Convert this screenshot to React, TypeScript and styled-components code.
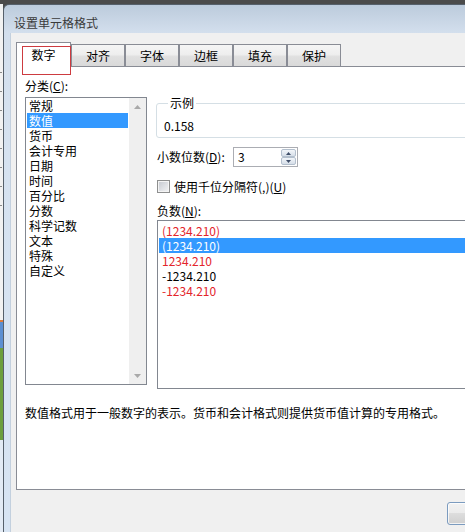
import React from "react";
import styled, { createGlobalStyle } from "styled-components";

const Global = createGlobalStyle`
  html, body { margin: 0; padding: 0; background: #4b4b4b; overflow: hidden; }
  body {
    font-family: "Noto Sans CJK SC", "Microsoft YaHei", sans-serif;
    font-size: 12px;
    color: #000;
  }
  * { box-sizing: border-box; }
`;

const Screen = styled.div`
  width: 465px;
  height: 532px;
  overflow: hidden;
  background: #4b4b4b;
  padding-top: 4px;
  display: flex;
  flex-direction: column;
`;

const Desktop = styled.div`
  flex: 1;
  min-height: 0;
  display: flex;
`;

const SheetEdge = styled.div`
  flex: none;
  width: 3px;
  background:
    repeating-linear-gradient(to bottom, transparent 0, transparent 18px, #8a8a8a 18px, #8a8a8a 19px) 0 50px / 2px 170px no-repeat,
    linear-gradient(
      to bottom,
      #f2f2f2 0,
      #f2f2f2 316px,
      #e07b39 316px,
      #e07b39 318px,
      #5b8fd2 318px,
      #5b8fd2 344px,
      #6c9f3d 344px,
      #6c9f3d 436px,
      #e3ebf5 436px,
      #e3ebf5 100%
    );
`;

const Window = styled.div`
  flex: none;
  width: 622px;
  display: flex;
  flex-direction: column;
  border: 1px solid #56606b;
  border-bottom: none;
  border-radius: 6px 6px 0 0;
  background: linear-gradient(to bottom, #bccbdc 0, #d3dfed 28px, #d6e2f0 140px, #d7e4f3 100%);
`;

const TitleBar = styled.div`
  flex: none;
  height: 28px;
  padding: 10px 0 0 10px;
  line-height: 16px;
  font-size: 12px;
  color: #3a3a3a;
`;

const Client = styled.div`
  flex: 1;
  display: flex;
  flex-direction: column;
  margin: 0 6px;
  padding: 9px 13px 0 5px;
  background: #f0f0f0;
  border-left: 1px solid #c3d0de;
  border-right: 1px solid #c3d0de;
`;

const TabStrip = styled.div`
  flex: none;
  height: 24px;
  display: flex;
  align-items: flex-end;
  position: relative;
  z-index: 1;
`;

const Tab = styled.div<{ $active?: boolean }>`
  flex: none;
  position: relative;
  display: flex;
  align-items: center;
  justify-content: center;
  width: ${(p) => (p.$active ? 55 : 54)}px;
  height: ${(p) => (p.$active ? 25 : 22)}px;
  margin-bottom: ${(p) => (p.$active ? -1 : 0)}px;
  padding-bottom: ${(p) => (p.$active ? 1 : 0)}px;
  border: 1px solid #898c95;
  border-bottom: none;
  background: ${(p) =>
    p.$active
      ? "#ffffff"
      : "linear-gradient(to bottom, #f5f5f5 0%, #eeeeee 45%, #e0e0e0 55%, #d9d9d9 100%)"};
  line-height: 16px;
  color: #000;
`;

const Highlight = styled.div`
  position: absolute;
  left: 5px;
  top: 3px;
  width: 49px;
  height: 29px;
  border: 1px solid #cd3b40;
  pointer-events: none;
`;

const Panel = styled.div`
  flex: none;
  height: 424px;
  display: flex;
  flex-direction: column;
  padding: 11px 8px 0 8px;
  background: #ffffff;
  border: 1px solid #898c95;
`;

const Columns = styled.div`
  display: flex;
  align-items: flex-start;
  gap: 10px;
`;

const LeftColumn = styled.div`
  flex: none;
  width: 122px;
  display: flex;
  flex-direction: column;
`;

const RightColumn = styled.div`
  flex: 1;
  min-width: 0;
  display: flex;
  flex-direction: column;
`;

const FieldLabel = styled.div`
  line-height: 16px;
  white-space: nowrap;
`;

const Key = styled.span`
  text-decoration: underline;
  text-underline-offset: 1px;
`;

const CategoryList = styled.div`
  margin-top: 3px;
  height: 288px;
  display: flex;
  border: 1px solid #828790;
  background: #fff;
`;

const CategoryItems = styled.div`
  flex: 1;
  padding: 0 1px;
  display: flex;
  flex-direction: column;
`;

const CategoryItem = styled.div<{ $selected?: boolean }>`
  height: 15px;
  line-height: 15px;
  padding-left: 2px;
  white-space: nowrap;
  background: ${(p) => (p.$selected ? "#3399ff" : "transparent")};
  color: ${(p) => (p.$selected ? "#ffffff" : "#000000")};
`;

const ScrollTrack = styled.div`
  flex: none;
  width: 17px;
  display: flex;
  flex-direction: column;
  justify-content: space-between;
  background: #efefef;
`;

const ScrollArrow = styled.div`
  height: 17px;
  display: flex;
  align-items: center;
  justify-content: center;
`;

const GroupBox = styled.fieldset`
  margin: 18px 0 0 -1px;
  padding: 8px 6px 3px 7px;
  min-width: 0;
  border: 1px solid #d5dfe5;
  border-radius: 3px;
`;

const GroupLegend = styled.legend`
  margin-left: 4px;
  padding: 0 2px;
  line-height: 14px;
`;

const SampleValue = styled.div`
  line-height: 16px;
`;

const DecimalRow = styled.div`
  margin-top: 9px;
  height: 20px;
  display: flex;
  align-items: center;
`;

const DecimalLabel = styled(FieldLabel)`
  flex: none;
  width: 76px;
`;

const SpinBox = styled.div`
  flex: none;
  width: 65px;
  height: 20px;
  padding: 1px;
  display: flex;
  border: 1px solid #abadb3;
  background: #fff;
`;

const SpinValue = styled.div`
  flex: 1;
  padding-left: 3px;
  line-height: 16px;
`;

const SpinButtons = styled.div`
  flex: none;
  width: 15px;
  display: flex;
  flex-direction: column;
`;

const SpinButton = styled.div`
  flex: 1;
  display: flex;
  align-items: center;
  justify-content: center;
  border: 1px solid #b3bfcd;
  border-radius: 2px;
  background: linear-gradient(to bottom, #f3f6fa 0%, #e4eaf1 50%, #d6dee8 100%);
`;

const CheckRow = styled.div`
  margin-top: 13px;
  height: 13px;
  display: flex;
  align-items: center;
  gap: 4px;
`;

const CheckBox = styled.div`
  flex: none;
  width: 13px;
  height: 13px;
  border: 1px solid #8e8f8f;
  background: linear-gradient(135deg, #c4c8cf 0%, #dfe1e5 55%, #f4f4f4 100%);
  box-shadow: inset 0 0 0 1px #f4f4f4;
`;

const NegLabel = styled(FieldLabel)`
  margin-top: 10px;
`;

const NegList = styled.div`
  margin-top: 1px;
  height: 169px;
  padding: 2px 0 0 1px;
  border: 1px solid #828790;
  border-right: none;
  background: #fff;
  display: flex;
  flex-direction: column;
`;

const NegItem = styled.div<{ $red?: boolean; $selected?: boolean }>`
  height: 15px;
  line-height: 15px;
  padding-left: 3px;
  white-space: nowrap;
  background: ${(p) => (p.$selected ? "#3399ff" : "transparent")};
  color: ${(p) => (p.$selected ? "#ffffff" : p.$red ? "#e3242b" : "#000000")};
`;

const Description = styled.div`
  margin-top: 16px;
  line-height: 16px;
  white-space: nowrap;
`;

const Footer = styled.div`
  flex: none;
  display: flex;
  justify-content: flex-end;
  gap: 7px;
  padding-top: 12px;
`;

const DialogButton = styled.button`
  width: 75px;
  height: 23px;
  padding: 0;
  font: inherit;
  border: 1px solid #7b9bbf;
  border-radius: 3px;
  background: linear-gradient(to bottom, #f2f2f2 0%, #ebebeb 50%, #dddddd 50%, #cfcfcf 100%);
  box-shadow: inset 0 0 0 1px rgba(255, 255, 255, 0.75);
`;

const Triangle = ({ up, w, h, color }: { up: boolean; w: number; h: number; color: string }) => (
  <svg width={w} height={h} viewBox={`0 0 ${w} ${h}`}>
    <path d={up ? `M0 ${h} L${w / 2} 0 L${w} ${h} Z` : `M0 0 L${w / 2} ${h} L${w} 0 Z`} fill={color} />
  </svg>
);

const tabs = ["数字", "对齐", "字体", "边框", "填充", "保护"];
const categories = ["常规", "数值", "货币", "会计专用", "日期", "时间", "百分比", "分数", "科学记数", "文本", "特殊", "自定义"];
const negatives = [
  { text: "(1234.210)", red: true },
  { text: "(1234.210)", red: false, selected: true },
  { text: "1234.210", red: true },
  { text: "-1234.210", red: false },
  { text: "-1234.210", red: true },
];

export default function App() {
  return (
    <>
      <Global />
      <Screen>
        <Desktop>
          <SheetEdge />
          <Window>
            <TitleBar>设置单元格格式</TitleBar>
            <Client>
              <TabStrip>
                {tabs.map((t, i) => (
                  <Tab key={t} $active={i === 0}>
                    {t}
                    {i === 0 && <Highlight />}
                  </Tab>
                ))}
              </TabStrip>
              <Panel>
                <Columns>
                  <LeftColumn>
                    <FieldLabel>
                      分类(<Key>C</Key>):
                    </FieldLabel>
                    <CategoryList>
                      <CategoryItems>
                        {categories.map((c) => (
                          <CategoryItem key={c} $selected={c === "数值"}>
                            {c}
                          </CategoryItem>
                        ))}
                      </CategoryItems>
                      <ScrollTrack>
                        <ScrollArrow>
                          <Triangle up w={7} h={4} color="#a9a9a9" />
                        </ScrollArrow>
                        <ScrollArrow>
                          <Triangle up={false} w={7} h={4} color="#a9a9a9" />
                        </ScrollArrow>
                      </ScrollTrack>
                    </CategoryList>
                  </LeftColumn>
                  <RightColumn>
                    <GroupBox>
                      <GroupLegend>示例</GroupLegend>
                      <SampleValue>0.158</SampleValue>
                    </GroupBox>
                    <DecimalRow>
                      <DecimalLabel>
                        小数位数(<Key>D</Key>):
                      </DecimalLabel>
                      <SpinBox>
                        <SpinValue>3</SpinValue>
                        <SpinButtons>
                          <SpinButton>
                            <Triangle up w={5} h={3} color="#3f4e69" />
                          </SpinButton>
                          <SpinButton>
                            <Triangle up={false} w={5} h={3} color="#3f4e69" />
                          </SpinButton>
                        </SpinButtons>
                      </SpinBox>
                    </DecimalRow>
                    <CheckRow>
                      <CheckBox />
                      <FieldLabel>
                        使用千位分隔符(,)(<Key>U</Key>)
                      </FieldLabel>
                    </CheckRow>
                    <NegLabel>
                      负数(<Key>N</Key>):
                    </NegLabel>
                    <NegList>
                      {negatives.map((n, i) => (
                        <NegItem key={i} $red={n.red} $selected={n.selected}>
                          {n.text}
                        </NegItem>
                      ))}
                    </NegList>
                  </RightColumn>
                </Columns>
                <Description>数值格式用于一般数字的表示。货币和会计格式则提供货币值计算的专用格式。</Description>
              </Panel>
              <Footer>
                <DialogButton aria-label="确定" />
                <DialogButton aria-label="取消" />
              </Footer>
            </Client>
          </Window>
        </Desktop>
      </Screen>
    </>
  );
}
